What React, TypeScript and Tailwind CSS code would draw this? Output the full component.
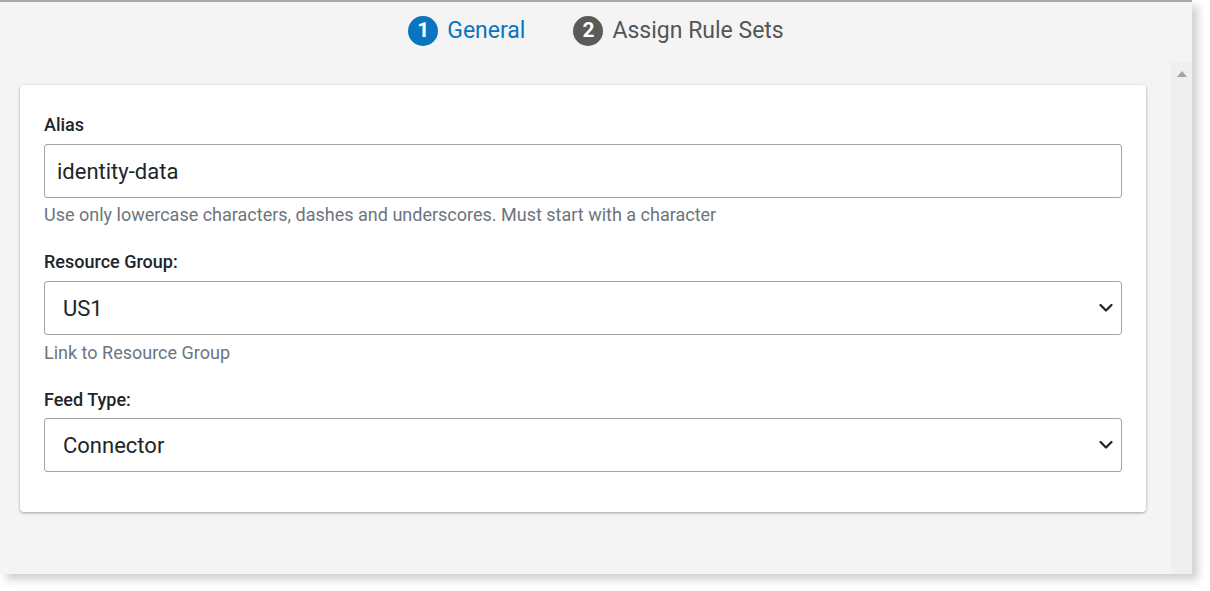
import React from 'react';

const fontStack = "font-['Roboto','Liberation_Sans',sans-serif]";

const StepItem: React.FC<{ n: number; label: string; active?: boolean }> = ({ n, label, active }) => (
  <div className="flex items-center gap-[9px]">
    <span
      className={`flex h-[30px] w-[30px] items-center justify-center rounded-full text-[21px] font-bold text-white ${
        active ? 'bg-[#0b74be]' : 'bg-[#5a5a5a]'
      }`}
    >
      {n}
    </span>
    <span className={`text-[23px] ${active ? 'text-[#0b74be]' : 'text-[#555555]'}`}>{label}</span>
  </div>
);

const Chevron = () => (
  <svg width="14" height="9" viewBox="0 0 14 9" className="absolute right-[8px] top-1/2 -translate-y-1/2">
    <path d="M1.5 1.5 L7 7 L12.5 1.5" fill="none" stroke="#222" strokeWidth="2.2" strokeLinecap="round" strokeLinejoin="round" />
  </svg>
);

const SelectBox: React.FC<{ value: string }> = ({ value }) => (
  <div className="relative flex h-[54px] items-center rounded-[3px] border border-[#a3a3a3] bg-white pl-[18px] text-[22px] text-[#212529]">
    {value}
    <Chevron />
  </div>
);

export default function App() {
  return (
    <div className={`h-[591px] w-[1210px] bg-white ${fontStack}`}>
      <div className="flex h-[574px] w-[1192px] flex-col border-t-2 border-[#a8a8a8] bg-[#f4f4f4] shadow-[6px_6px_8px_rgba(0,0,0,0.18)]">
        {/* Stepper */}
        <div className="flex h-[60px] items-center justify-center gap-[48px] pb-[2px]">
          <StepItem n={1} label="General" active />
          <StepItem n={2} label="Assign Rule Sets" />
        </div>

        <div className="flex flex-1">
          <div className="flex-1 pl-[20px] pr-[25px] pt-[23px]">
            <div className="rounded-[4px] bg-white px-[24px] pb-[40px] pt-[28px] shadow-[0_1px_3px_rgba(0,0,0,0.35)]">
              <label className="mb-[7px] block text-[18px] font-medium leading-[24px] text-[#212529]">Alias</label>
              <div className="flex h-[54px] items-center rounded-[3px] border border-[#a3a3a3] bg-white pl-[12px] text-[22px] text-[#212529]">
                identity-data
              </div>
              <p className="mt-[5px] text-[18px] leading-[24px] text-[#6c757d]">
                Use only lowercase characters, dashes and underscores. Must start with a character
              </p>

              <label className="mb-[7px] mt-[23px] block text-[18px] font-medium leading-[24px] text-[#212529]">
                Resource Group:
              </label>
              <SelectBox value="US1" />
              <p className="mt-[6px] text-[18px] leading-[24px] text-[#6a7684]">Link to Resource Group</p>

              <label className="mb-[6px] mt-[23px] block text-[18px] font-medium leading-[24px] text-[#212529]">
                Feed Type:
              </label>
              <SelectBox value="Connector" />
            </div>
          </div>

          {/* Scrollbar */}
          <div className="flex w-[21px] justify-center bg-[#efefef] pt-[9px]">
            <div className="h-0 w-0 border-x-[5px] border-b-[6px] border-x-transparent border-b-[#a3a3a3]" />
          </div>
        </div>
      </div>
    </div>
  );
}
